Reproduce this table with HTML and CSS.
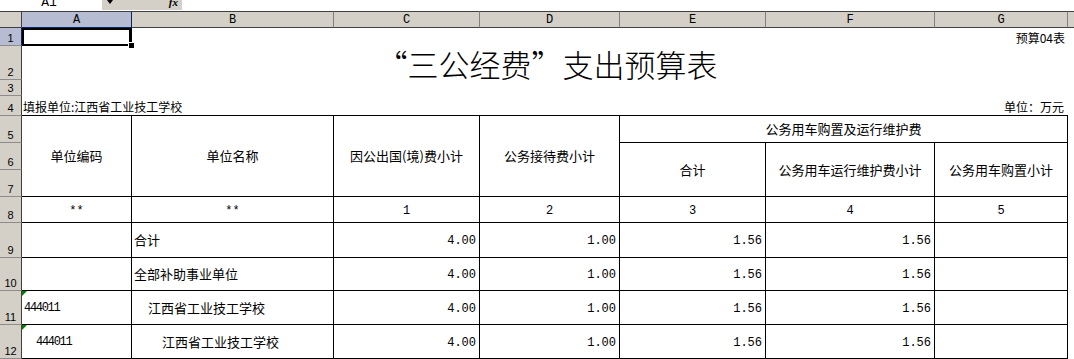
FILE: index.html
```html
<!DOCTYPE html>
<html lang="zh-CN">
<head>
<meta charset="utf-8">
<title>“三公经费”支出预算表</title>
<link rel="stylesheet" href="styles.css">
</head>
<body>
<div class="formula-bar">
  <div class="name-box"><span class="name-text">A1</span></div>
  <div class="name-drop"><span class="arrow"></span><span class="fx">fx</span></div>
  <div class="formula-input"></div>
</div>
<div class="sheet">
  <div class="corner"></div>
  <div class="colh sel">A</div>
  <div class="colh">B</div>
  <div class="colh">C</div>
  <div class="colh">D</div>
  <div class="colh">E</div>
  <div class="colh">F</div>
  <div class="colh">G</div>
  <div class="colh colh-last"></div>

  <div class="rowh sel">1</div>
  <div class="active"></div>
  <div class="span5"></div>
  <div class="form-no">预算04表</div>
  <div></div>

  <div class="rowh">2</div>
  <div class="title span7">“三公经费”支出预算表</div>
  <div></div>

  <div class="rowh">3</div>
  <div class="span8"></div>

  <div class="rowh">4</div>
  <div class="meta span6">填报单位:江西省工业技工学校</div>
  <div class="meta meta-right">单位：万元</div>
  <div></div>

  <div class="rowh">5</div>
  <div class="th r3">单位编码</div>
  <div class="th r3">单位名称</div>
  <div class="th r3">因公出国(境)费小计</div>
  <div class="th r3">公务接待费小计</div>
  <div class="th span3">公务用车购置及运行维护费</div>
  <div></div>

  <div class="rowh">6</div>
  <div class="th r2">合计</div>
  <div class="th r2">公务用车运行维护费小计</div>
  <div class="th r2">公务用车购置小计</div>
  <div></div>

  <div class="rowh">7</div>
  <div></div>

  <div class="rowh">8</div>
  <div class="td idx">**</div>
  <div class="td idx">**</div>
  <div class="td idx">1</div>
  <div class="td idx">2</div>
  <div class="td idx">3</div>
  <div class="td idx">4</div>
  <div class="td idx">5</div>
  <div></div>

  <div class="rowh">9</div>
  <div class="td"></div>
  <div class="td name">合计</div>
  <div class="td num">4.00</div>
  <div class="td num">1.00</div>
  <div class="td num">1.56</div>
  <div class="td num">1.56</div>
  <div class="td"></div>
  <div></div>

  <div class="rowh">10</div>
  <div class="td"></div>
  <div class="td name">全部补助事业单位</div>
  <div class="td num">4.00</div>
  <div class="td num">1.00</div>
  <div class="td num">1.56</div>
  <div class="td num">1.56</div>
  <div class="td"></div>
  <div></div>

  <div class="rowh">11</div>
  <div class="td code flag">444011</div>
  <div class="td name indent1">江西省工业技工学校</div>
  <div class="td num">4.00</div>
  <div class="td num">1.00</div>
  <div class="td num">1.56</div>
  <div class="td num">1.56</div>
  <div class="td"></div>
  <div></div>

  <div class="rowh">12</div>
  <div class="td code code-indent flag">444011</div>
  <div class="td name indent2">江西省工业技工学校</div>
  <div class="td num">4.00</div>
  <div class="td num">1.00</div>
  <div class="td num">1.56</div>
  <div class="td num">1.56</div>
  <div class="td"></div>
  <div></div>
</div>
</body>
</html>
```
FILE: styles.css
```css
* {
  box-sizing: border-box;
}

html, body {
  margin: 0;
  padding: 0;
  background: #ffffff;
}

body {
  width: 1074px;
  height: 359px;
  overflow: hidden;
  font-family: "Noto Sans CJK SC", sans-serif;
  color: #000000;
}

/* ---------- formula bar ---------- */
.formula-bar {
  display: flex;
  height: 10px;
  overflow: hidden;
}

.name-box {
  width: 102px;
  background: #ffffff;
  text-align: center;
}

.name-text {
  display: block;
  margin-top: -3px;
  font: 13px/12px "Liberation Mono", monospace;
  padding-right: 4px;
}

.name-drop {
  width: 80px;
  background: #d4d0c8;
  display: flex;
  justify-content: space-between;
  align-items: flex-start;
  padding: 0 4px 0 5px;
}

.arrow {
  width: 0;
  height: 0;
  border-top: 4px solid #000000;
  border-left: 3px solid transparent;
  border-right: 3px solid transparent;
}

.fx {
  display: block;
  margin-top: -4px;
  font: italic bold 11px/12px "Liberation Serif", serif;
}

.formula-input {
  flex: 1;
  background: #ffffff;
}

/* ---------- sheet grid ---------- */
.sheet {
  margin-top: 1px;
  display: grid;
  grid-template-columns: 22px 110px 202px 146px 140px 146px 169px 133px 1fr;
  grid-template-rows: 17px 18px 34px 16px 20px 27px 27px 27px 26px 35px 33px 34px 34px;
}

.sheet > div {
  min-width: 0;
}

.corner,
.colh {
  background: #d4d0c8;
  border-top: 1px solid #404040;
  border-bottom: 1px solid #404040;
  border-right: 1px solid #808080;
  font: 12px/14px "Liberation Mono", monospace;
  text-align: center;
  padding-top: 1px;
}

.corner {
  border-right-color: #404040;
}

.colh.sel {
  background: #b6bdd2;
  border-bottom-color: #0a246a;
  border-right-color: #0a246a;
}

.colh-last {
  border-right: none;
}

.rowh {
  grid-column: 1;
  background: #d4d0c8;
  border-right: 1px solid #404040;
  border-bottom: 1px solid #8c8c8c;
  font: 11px/12px "Liberation Sans", sans-serif;
  display: flex;
  align-items: flex-end;
  justify-content: center;
  padding-bottom: 1px;
}

.rowh.sel {
  background: #b6bdd2;
  border-right-color: #0a246a;
}

.span3 { grid-column: span 3; }
.span5 { grid-column: span 5; }
.span6 { grid-column: span 6; }
.span7 { grid-column: span 7; }
.span8 { grid-column: span 8; }
.r2 { grid-row: span 2; }
.r3 { grid-row: span 3; }

/* active cell A1 */
.active {
  position: relative;
  border: 2px solid #000000;
  border-right-width: 3px;
}

.active::after {
  content: "";
  position: absolute;
  right: -5px;
  bottom: -4px;
  width: 5px;
  height: 5px;
  background: #000000;
  border: 1px solid #ffffff;
  border-width: 1px 0 0 1px;
}

.form-no {
  display: flex;
  align-items: center;
  justify-content: flex-end;
  padding-right: 3px;
  font-size: 12px;
  line-height: 14px;
  padding-top: 1px;
}

.title {
  display: flex;
  align-items: center;
  justify-content: center;
  padding-left: 4px;
  padding-top: 1px;
  font-size: 31px;
  font-weight: 300;
  line-height: 34px;
  white-space: nowrap;
}

.meta {
  display: flex;
  align-items: flex-end;
  border-bottom: 1px solid #000000;
  font-size: 12px;
  line-height: 14px;
  padding-left: 1px;
  padding-bottom: 1px;
  white-space: nowrap;
}

.meta-right {
  justify-content: flex-end;
  padding-right: 4px;
}

/* table cells */
.th,
.td {
  border-right: 1px solid #000000;
  border-bottom: 1px solid #000000;
  display: flex;
  align-items: center;
  font-size: 13px;
  line-height: 16px;
  white-space: nowrap;
}

.th {
  justify-content: center;
  text-align: center;
}

.idx {
  justify-content: center;
  font: 12px/14px "Liberation Mono", monospace;
  padding-top: 2px;
}

.name {
  padding-left: 2px;
}

.indent1 {
  padding-left: 16px;
}

.indent2 {
  padding-left: 30px;
}

.num {
  justify-content: flex-end;
  padding-right: 3px;
  font: 12px/14px "Liberation Mono", monospace;
  padding-top: 2px;
}

.code {
  padding-left: 2px;
  font: 12px/14px "Liberation Mono", monospace;
  letter-spacing: -1.3px;
  padding-top: 1px;
}

.code-indent {
  padding-left: 14px;
}

.flag {
  position: relative;
}

.flag::before {
  content: "";
  position: absolute;
  left: 0;
  top: 0;
  border-top: 5px solid #008000;
  border-right: 5px solid transparent;
}
```
